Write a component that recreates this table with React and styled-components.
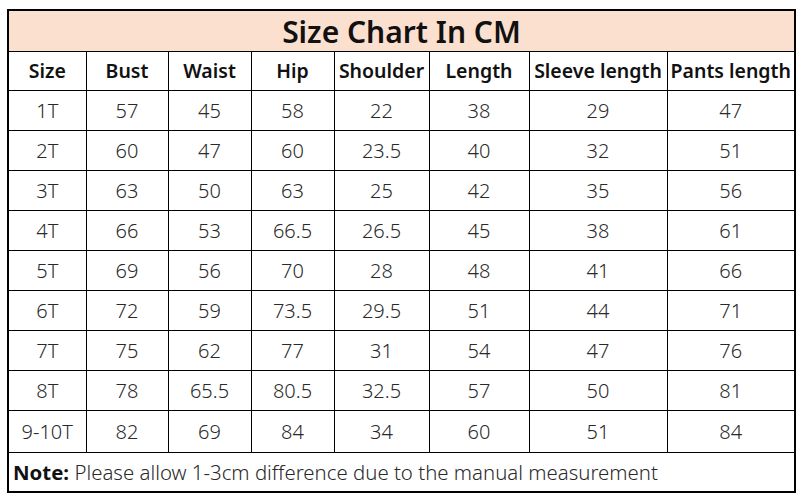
import React from 'react'
import styled, {createGlobalStyle} from 'styled-components'

const GlobalStyle = createGlobalStyle`
	html, body {
		margin: 0;
		padding: 0;
		background: #fff;
	}
	body {
		font-family: "Noto Sans", "Liberation Sans", sans-serif;
		color: #111;
	}
`

const Page = styled.div`
	width: 802px;
	height: 501px;
	padding: 9px 0 0 7px;
	box-sizing: border-box;
`

const Chart = styled.table`
	width: 787px;
	border-collapse: collapse;
	table-layout: fixed;
	border: 2px solid #000;
`

const Cell = styled.td`
	border: 1px solid #000;
	padding: 0;
	text-align: center;
	vertical-align: middle;
	white-space: nowrap;
	overflow: hidden;
	line-height: 1.1;
	font-size: 20px;
	font-weight: 300;
	color: #2a2a2a;
`

const Title = styled(Cell)`
	height: 40px;
	background: #fbdfcf;
	font-size: 30px;
	font-weight: 600;
	color: #111;
`

const Head = styled(Cell)`
	height: 38px;
	font-size: 19.5px;
	font-weight: 600;
	color: #111;
`

const Row = styled.tr`
	height: ${p => p.$h}px;
`

const Note = styled(Cell)`
	height: 38px;
	text-align: left;
	padding-left: 4px;
	font-size: 20.4px;
	color: #2a2a2a;
	b {
		font-weight: 700;
		color: #111;
	}
`

const widths = [78, 82, 83, 83, 95, 100, 138, 128]
const headers = ['Size', 'Bust', 'Waist', 'Hip', 'Shoulder', 'Length', 'Sleeve length', 'Pants length']
const rows = [
	['1T', 57, 45, 58, 22, 38, 29, 47],
	['2T', 60, 47, 60, 23.5, 40, 32, 51],
	['3T', 63, 50, 63, 25, 42, 35, 56],
	['4T', 66, 53, 66.5, 26.5, 45, 38, 61],
	['5T', 69, 56, 70, 28, 48, 41, 66],
	['6T', 72, 59, 73.5, 29.5, 51, 44, 71],
	['7T', 75, 62, 77, 31, 54, 47, 76],
	['8T', 78, 65.5, 80.5, 32.5, 57, 50, 81],
	['9-10T', 82, 69, 84, 34, 60, 51, 84]
]

export default function App() {
	return <>
		<GlobalStyle/>
		<Page>
			<Chart>
				<colgroup>
					{widths.map((w, i) => <col key={i} style={{width: w}}/>)}
				</colgroup>
				<tbody>
					<tr>
						<Title colSpan={8}>Size Chart In CM</Title>
					</tr>
					<tr>
						{headers.map(h => <Head key={h}>{h}</Head>)}
					</tr>
					{rows.map((r, i) => (
						<Row key={r[0]} $h={i === rows.length - 1 ? 42 : 40}>
							{r.map((v, j) => <Cell key={j}>{v}</Cell>)}
						</Row>
					))}
					<tr>
						<Note colSpan={8}>
							<b>Note:</b> Please allow 1-3cm difference due to the manual measurement
						</Note>
					</tr>
				</tbody>
			</Chart>
		</Page>
	</>
}
